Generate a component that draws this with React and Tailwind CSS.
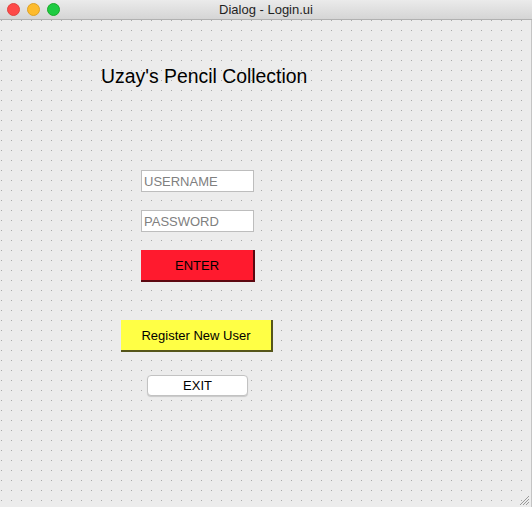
export default function App() {
  return (
    <div className="w-[532px] h-[507px] flex flex-col bg-[#ececec] overflow-hidden" style={{ fontFamily: '"Liberation Sans", Arial, sans-serif' }}>
      {/* title bar */}
      <div className="relative h-[20px] flex-shrink-0 flex items-center justify-center bg-linear-to-b from-[#ebebeb] to-[#d5d5d5] border-b border-[#b1b1b1]">
        <div className="absolute left-[7px] top-[3px] flex gap-[7px]">
          <span className="w-[13px] h-[13px] rounded-full bg-[#fe4a49] border border-[#e0443e]" />
          <span className="w-[13px] h-[13px] rounded-full bg-[#fdbb2d] border border-[#dea123]" />
          <span className="w-[13px] h-[13px] rounded-full bg-[#1ecb42] border border-[#1aab29]" />
        </div>
        <span className="text-[13px] text-[#1f1f1f] leading-none">Dialog - Login.ui</span>
      </div>

      {/* dotted form canvas */}
      <div className="relative flex-1 border-r border-[#c4c4c4] bg-[radial-gradient(circle_at_1.5px_0.5px,#a9a9a9_0.7px,transparent_0.9px)] bg-size-[10px_10px]">
        <div className="flex flex-col">
          <h1 className="ml-[101px] mt-[45px] text-[19.4px] leading-[22px] text-black">Uzay's Pencil Collection</h1>

          <input
            readOnly
            placeholder="USERNAME"
            className="ml-[141px] mt-[83px] w-[113px] h-[22px] bg-white border border-[#bdbdbd] px-[2px] text-[13px] placeholder:text-[#808080] outline-none"
          />
          <input
            readOnly
            placeholder="PASSWORD"
            className="ml-[141px] mt-[18px] w-[113px] h-[22px] bg-white border border-[#bdbdbd] px-[2px] text-[13px] placeholder:text-[#808080] outline-none"
          />

          <button className="ml-[141px] mt-[18px] w-[114px] h-[32px] pt-[2px] bg-[#ff1a2e] border-r-2 border-b-2 border-[#5c0710] text-[13px] text-black">
            ENTER
          </button>

          <button className="ml-[121px] mt-[38px] w-[152px] h-[32px] pt-[2px] bg-[#ffff45] border-r-2 border-b-2 border-[#55551a] text-[13px] text-black">
            Register New User
          </button>

          <button className="ml-[147px] mt-[23px] w-[101px] h-[21px] bg-white rounded-[4px] border border-[#c2c2c2] shadow-[0_1px_1px_rgba(0,0,0,0.15)] text-[13px] text-black">
            EXIT
          </button>
        </div>

        {/* resize grip */}
        <svg className="absolute right-[1px] bottom-[1px]" width="12" height="12" viewBox="0 0 12 12">
          <path d="M11 2 L2 11 M11 5 L5 11 M11 8 L8 11" stroke="#9a9a9a" strokeWidth="1" />
        </svg>
      </div>
    </div>
  )
}
